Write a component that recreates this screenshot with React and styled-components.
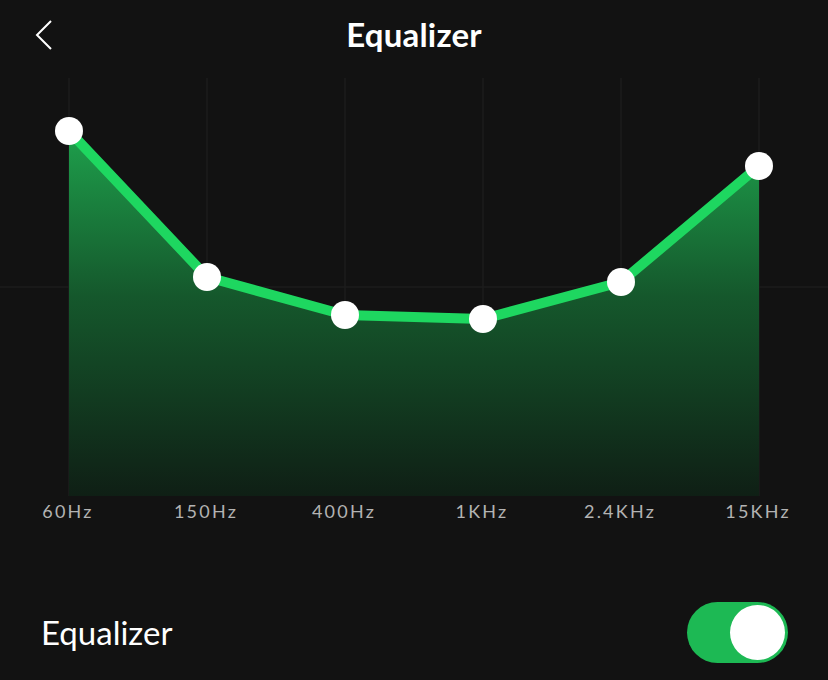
import React from "react";
import styled, { createGlobalStyle } from "styled-components";

const Global = createGlobalStyle`
  html, body { margin: 0; padding: 0; background: #121212; }
  body { font-family: Lato, "Noto Sans", sans-serif; color: #fff; }
`;

const Screen = styled.div`
  width: 828px;
  height: 680px;
  background: #121212;
  display: flex;
  flex-direction: column;
  overflow: hidden;
`;

const Header = styled.header`
  height: 70px;
  display: grid;
  grid-template-columns: 80px 1fr 80px;
  align-items: center;
`;

const BackButton = styled.button`
  background: none;
  border: 0;
  padding: 0 0 0 34px;
  height: 40px;
  display: flex;
  align-items: center;
  cursor: pointer;
`;

const Title = styled.h1`
  margin: 0 0 3px;
  text-align: center;
  font-size: 33px;
  font-weight: 700;
  letter-spacing: 0.2px;
`;

const ChartArea = styled.section`
  margin-top: 8px;
  display: flex;
  flex-direction: column;
`;

const Labels = styled.div`
  display: grid;
  grid-template-columns: repeat(6, 138px);
  margin-left: -1px;
  margin-top: 5px;
`;

const Label = styled.span`
  text-align: center;
  font-size: 18px;
  letter-spacing: 2.2px;
  color: #b3b3b3;
  line-height: 20px;
`;

const SettingRow = styled.div`
  margin-top: auto;
  height: 96px;
  display: flex;
  align-items: center;
  justify-content: space-between;
  padding: 0 40px 0 41px;
`;

const SettingText = styled.span`
  font-size: 33px;
  font-weight: 400;
`;

const Toggle = styled.div`
  width: 101px;
  height: 61px;
  border-radius: 31px;
  background: #1db954;
  display: flex;
  align-items: center;
  justify-content: ${(p) => (p.$on ? "flex-end" : "flex-start")};
  padding: 0 3px;
  box-sizing: border-box;
`;

const Knob = styled.div`
  width: 55px;
  height: 55px;
  border-radius: 50%;
  background: #fff;
`;

const bands = [
  { label: "60Hz", y: 131 },
  { label: "150Hz", y: 277 },
  { label: "400Hz", y: 315 },
  { label: "1KHz", y: 319 },
  { label: "2.4KHz", y: 282 },
  { label: "15KHz", y: 166 },
];

const TOP = 78;
const H = 418;
const xs = [69, 207, 345, 483, 621, 759];

function Chart() {
  const pts = bands.map((b, i) => [xs[i], b.y - TOP]);
  const line = pts.map((p) => p.join(",")).join(" ");
  const area = `${xs[0]},${H} ${line} ${xs[5]},${H}`;
  return (
    <svg width="828" height={H} viewBox={`0 0 828 ${H}`}>
      <defs>
        <linearGradient id="eqFill" x1="0" y1="0" x2="0" y2="1">
          <stop offset="0" stopColor="#1ea04c" />
          <stop offset="0.45" stopColor="#15582c" />
          <stop offset="1" stopColor="#0f1f15" />
        </linearGradient>
      </defs>
      {xs.map((x) => (
        <line key={x} x1={x} y1="0" x2={x} y2={H} stroke="#1c1c1c" strokeWidth="1.5" />
      ))}
      <line x1="0" y1={287 - TOP} x2="828" y2={287 - TOP} stroke="#1c1c1c" strokeWidth="1.5" />
      <polygon points={area} fill="url(#eqFill)" />
      <polyline
        points={line}
        fill="none"
        stroke="#1ed760"
        strokeWidth="10"
        strokeLinejoin="round"
        strokeLinecap="round"
      />
      {pts.map(([x, y]) => (
        <circle key={x} cx={x} cy={y} r="14" fill="#fff" />
      ))}
    </svg>
  );
}

export default function App() {
  return (
    <Screen>
      <Global />
      <Header>
        <BackButton aria-label="Back">
          <svg width="20" height="32" viewBox="0 0 20 32">
            <polyline points="17,2 3,16 17,30" fill="none" stroke="#fff" strokeWidth="2" />
          </svg>
        </BackButton>
        <Title>Equalizer</Title>
        <span />
      </Header>
      <ChartArea>
        <Chart />
        <Labels>
          {bands.map((b) => (
            <Label key={b.label}>{b.label}</Label>
          ))}
        </Labels>
      </ChartArea>
      <SettingRow>
        <SettingText>Equalizer</SettingText>
        <Toggle $on>
          <Knob />
        </Toggle>
      </SettingRow>
    </Screen>
  );
}
